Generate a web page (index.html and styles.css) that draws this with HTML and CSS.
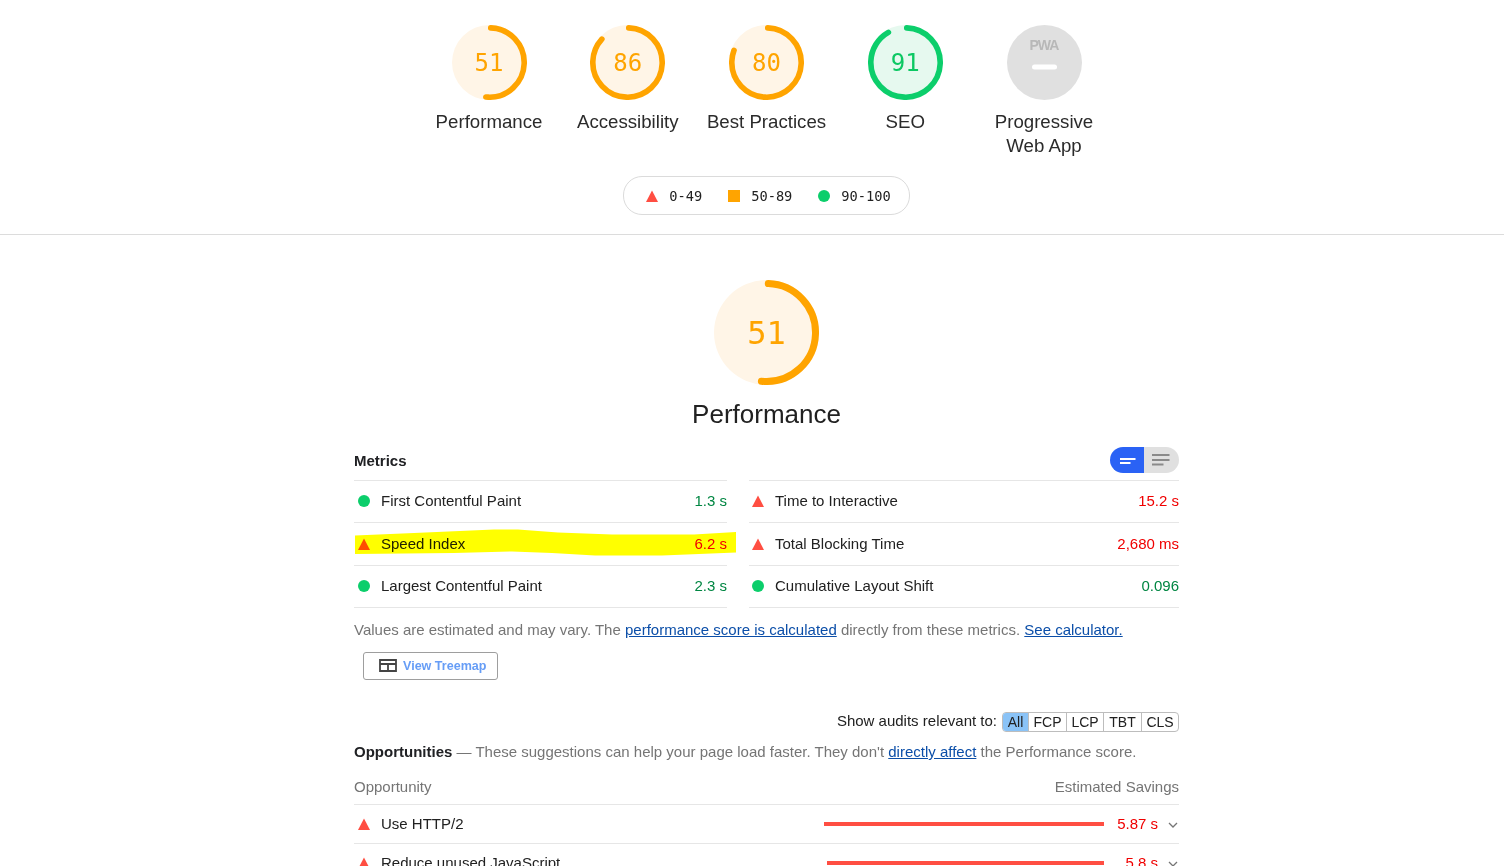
FILE: index.html
```html
<!DOCTYPE html>
<html lang="en">
<head>
<meta charset="utf-8">
<title>Lighthouse Report</title>
<link rel="stylesheet" href="styles.css">
</head>
<body>
<header class="top">
  <div class="wrap">
    <div class="gauges">
      <div class="gauge-item">
        <svg class="gauge" viewBox="0 0 120 120"><circle class="base orange-base" cx="60" cy="60" r="60"/><circle class="arc orange-arc" cx="60" cy="60" r="55.5" stroke-dasharray="178 349"/></svg>
        <div class="num orange-text">51</div>
        <div class="gauge-label">Performance</div>
      </div>
      <div class="gauge-item">
        <svg class="gauge" viewBox="0 0 120 120"><circle class="base orange-base" cx="60" cy="60" r="60"/><circle class="arc orange-arc" cx="60" cy="60" r="55.5" stroke-dasharray="300 349"/></svg>
        <div class="num orange-text">86</div>
        <div class="gauge-label">Accessibility</div>
      </div>
      <div class="gauge-item">
        <svg class="gauge" viewBox="0 0 120 120"><circle class="base orange-base" cx="60" cy="60" r="60"/><circle class="arc orange-arc" cx="60" cy="60" r="55.5" stroke-dasharray="279 349"/></svg>
        <div class="num orange-text">80</div>
        <div class="gauge-label">Best Practices</div>
      </div>
      <div class="gauge-item">
        <svg class="gauge" viewBox="0 0 120 120"><circle class="base green-base" cx="60" cy="60" r="60"/><circle class="arc green-arc" cx="60" cy="60" r="55.5" stroke-dasharray="317.5 349"/></svg>
        <div class="num green-text">91</div>
        <div class="gauge-label">SEO</div>
      </div>
      <div class="gauge-item">
        <svg class="gauge" viewBox="0 0 120 120"><circle class="base grey-base" cx="60" cy="60" r="60"/><rect x="40" y="63" width="40" height="8" rx="4" fill="#fff"/></svg>
        <div class="pwa-logo">PWA</div>
        <div class="gauge-label">Progressive<br>Web App</div>
      </div>
    </div>
    <div class="legend-row">
      <div class="legend">
        <div class="legend-item"><svg class="ico" viewBox="0 0 12 12"><path class="tri" d="M6 0.5 12 12H0z"/></svg><span>0-49</span></div>
        <div class="legend-item"><span class="square"></span><span>50-89</span></div>
        <div class="legend-item"><span class="dot"></span><span>90-100</span></div>
      </div>
    </div>
  </div>
</header>

<main class="wrap main">
  <div class="big-gauge">
    <svg class="gauge-lg" viewBox="0 0 120 120"><circle class="base orange-base" cx="60" cy="60" r="60"/><circle class="arc orange-arc" cx="60" cy="60" r="56" stroke-dasharray="179.5 352"/></svg>
    <div class="num-lg orange-text">51</div>
  </div>
  <h1 class="title">Performance</h1>

  <div class="metrics-head">
    <div class="strong">Metrics</div>
    <div class="toggle">
      <span class="toggle-on"><svg width="16" height="10" viewBox="0 0 16 10"><rect y="3" width="15.5" height="2" fill="#fff"/><rect y="7" width="10.5" height="2" fill="#fff"/></svg></span>
      <span class="toggle-off"><svg width="18" height="14" viewBox="0 0 18 14"><rect y="1" width="17.5" height="2" fill="#8a8a8a"/><rect y="6" width="17.5" height="2" fill="#8a8a8a"/><rect y="10.5" width="11.5" height="2" fill="#8a8a8a"/></svg></span>
    </div>
  </div>

  <div class="metrics">
    <div class="metric"><span class="dot"></span><span class="m-name">First Contentful Paint</span><span class="good">1.3 s</span></div>
    <div class="metric"><svg class="ico" viewBox="0 0 12 12"><path class="tri" d="M6 0.5 12 12H0z"/></svg><span class="m-name">Time to Interactive</span><span class="bad">15.2 s</span></div>
    <div class="metric"><svg class="ico" viewBox="0 0 12 12"><path class="tri" d="M6 0.5 12 12H0z"/></svg><span class="m-name">Speed Index</span><span class="bad">6.2 s</span></div>
    <div class="metric"><svg class="ico" viewBox="0 0 12 12"><path class="tri" d="M6 0.5 12 12H0z"/></svg><span class="m-name">Total Blocking Time</span><span class="bad">2,680 ms</span></div>
    <div class="metric"><span class="dot"></span><span class="m-name">Largest Contentful Paint</span><span class="good">2.3 s</span></div>
    <div class="metric"><span class="dot"></span><span class="m-name">Cumulative Layout Shift</span><span class="good">0.096</span></div>
    <svg class="marker" width="382" height="27" viewBox="0 0 382 27"><path d="M1 6.5 60 4 140 0.5 164 0.5 204 3.5 258 5.5 340 5.5 382 3V23.5L308 26.5 241 26.5 198 24 158 22.5 100 24 1 25z" fill="#ffff00"/></svg>
  </div>

  <p class="note">Values are estimated and may vary. The <a href="#">performance score is calculated</a> directly from these metrics. <a href="#">See calculator.</a></p>

  <div class="treemap-row">
    <a class="treemap" href="#"><svg width="18" height="13" viewBox="0 0 18 13"><path d="M1 1h16v11H1zM1 5h16M9 5v7" fill="none" stroke="#444" stroke-width="1.8"/></svg><span>View Treemap</span></a>
  </div>

  <div class="filter-row">
    <span class="filter-label">Show audits relevant to:</span>
    <div class="chips">
      <span class="chip chip-on">All</span><span class="chip chip-a">FCP</span><span class="chip chip-b">LCP</span><span class="chip chip-a">TBT</span><span class="chip chip-b">CLS</span>
    </div>
  </div>

  <p class="opp-intro"><b class="strong">Opportunities</b> — These suggestions can help your page load faster. They don't <a href="#">directly affect</a> the Performance score.</p>

  <div class="opp-head"><span>Opportunity</span><span>Estimated Savings</span></div>

  <div class="opp-row">
    <svg class="ico" viewBox="0 0 12 12"><path class="tri" d="M6 0.5 12 12H0z"/></svg>
    <span class="m-name">Use HTTP/2</span>
    <span class="bar bar-1"></span>
    <span class="bad saving">5.87 s</span>
    <svg class="chev" width="10" height="6" viewBox="0 0 10 6"><path d="M1 1l4 4 4-4" fill="none" stroke="#757575" stroke-width="1.3"/></svg>
  </div>
  <div class="opp-row">
    <svg class="ico" viewBox="0 0 12 12"><path class="tri" d="M6 0.5 12 12H0z"/></svg>
    <span class="m-name">Reduce unused JavaScript</span>
    <span class="bar bar-2"></span>
    <span class="bad saving">5.8 s</span>
    <svg class="chev" width="10" height="6" viewBox="0 0 10 6"><path d="M1 1l4 4 4-4" fill="none" stroke="#757575" stroke-width="1.3"/></svg>
  </div>
</main>
</body>
</html>
```
FILE: styles.css
```css
html, body {
  margin: 0;
  padding: 0;
  height: 866px;
  overflow: hidden;
  background: #fff;
}
body {
  font-family: "Liberation Sans", Arial, sans-serif;
  font-size: 15px;
  line-height: 20px;
  color: #212121;
}
a { color: #0b4ea8; text-decoration: underline; }
p, h1 { margin: 0; }

.wrap { width: 825px; margin-left: 354px; }

.top {
  border-bottom: 1px solid #dcdcdc;
  padding-top: 25px;
  padding-bottom: 19px;
}
.gauges { display: flex; justify-content: center; }
.gauge-item {
  width: 138.75px;
  position: relative;
  display: flex;
  flex-direction: column;
  align-items: center;
  height: 133px;
}
.gauge { width: 75px; height: 75px; display: block; flex: none; }
.gauge-lg { width: 105px; height: 105px; display: block; }
.orange-base { fill: #fff5e7; }
.green-base { fill: #e6f9ef; }
.grey-base { fill: #e0e0e0; }
.arc {
  fill: none;
  stroke-width: 9;
  stroke-linecap: round;
  transform: rotate(-87.9deg);
  transform-origin: 60px 60px;
}
.big-gauge .arc { stroke-width: 8; }
.orange-arc { stroke: #ffa400; }
.green-arc { stroke: #0cce6b; }
.orange-text { color: #ffa400; }
.green-text { color: #0cc863; }

.num {
  position: absolute;
  top: 0;
  left: 0;
  right: 0;
  height: 75px;
  line-height: 77px;
  text-align: center;
  font-family: "DejaVu Sans Mono", monospace;
  font-size: 24px;
}
.pwa-logo {
  position: absolute;
  top: 12px;
  left: 0;
  right: 0;
  line-height: 17px;
  text-align: center;
  font-size: 14px;
  font-weight: bold;
  letter-spacing: -0.9px;
  color: #b8b8b8;
}
.gauge-label {
  margin-top: 10px;
  font-size: 18.67px;
  line-height: 24px;
  text-align: center;
  color: #2b2b2b;
}

.legend-row { display: flex; justify-content: center; margin-top: 18px; }
.legend {
  display: flex;
  align-items: center;
  gap: 26px;
  height: 39px;
  box-sizing: border-box;
  padding: 0 18px 0 22px;
  border: 1px solid #dbdbdb;
  border-radius: 19px;
  font-family: "DejaVu Sans Mono", monospace;
  font-size: 13.7px;
}
.legend-item { display: flex; align-items: center; gap: 11px; }
.ico { width: 12px; height: 12px; flex: none; display: block; }
.tri { fill: #ff4e42; }
.square { width: 12px; height: 12px; background: #ffa400; flex: none; }
.dot { width: 12px; height: 12px; border-radius: 50%; background: #0cce6b; flex: none; }

.main { padding-top: 45px; }
.big-gauge { position: relative; width: 105px; margin: 0 auto; }
.num-lg {
  position: absolute;
  inset: 0;
  line-height: 107px;
  text-align: center;
  font-family: "DejaVu Sans Mono", monospace;
  font-size: 32px;
}
.title {
  margin-top: 14px;
  font-size: 26px;
  line-height: 30px;
  font-weight: normal;
  text-align: center;
}

.metrics-head {
  margin-top: 18px;
  height: 33px;
  display: flex;
  justify-content: space-between;
  align-items: flex-start;
}
.metrics-head .strong { line-height: 28px; }
.strong { font-weight: bold; color: #202124; }
.toggle { display: flex; height: 26px; border-radius: 13px; overflow: hidden; }
.toggle-on, .toggle-off { display: flex; align-items: center; justify-content: center; }
.toggle-on { width: 34px; background: #2a62f5; padding-left: 2px; box-sizing: border-box; }
.toggle-off { width: 35px; background: #e0e0e0; padding-right: 2px; box-sizing: border-box; }

.metrics {
  position: relative;
  display: grid;
  grid-template-columns: 373px 430px;
  column-gap: 22px;
}
.metric {
  display: flex;
  align-items: center;
  height: 42.33px;
  box-sizing: border-box;
  border-top: 1px solid #e6e6e6;
  padding-left: 4px;
}
.metric:nth-child(even) { padding-left: 3px; }
.metric:nth-child(-n+2) { padding-bottom: 1px; }
.metric:nth-child(5), .metric:nth-child(6) {
  border-bottom: 1px solid #e6e6e6;
  height: 43.33px;
}
.m-name { margin-left: 11px; flex: 1; }
.metric .m-name { color: #212121; }
.good { color: #018642; }
.bad { color: #f00000; }
.marker {
  position: absolute;
  left: 0;
  top: 49px;
  mix-blend-mode: multiply;
}

.note { margin-top: 12px; color: #757575; }
.treemap-row { margin-top: 12px; margin-left: 9px; }
.treemap {
  display: inline-flex;
  align-items: center;
  gap: 6px;
  height: 28px;
  box-sizing: border-box;
  padding: 0 11px 0 15px;
  border: 1px solid #9e9e9e;
  border-radius: 3px;
  font-size: 12.55px;
  font-weight: bold;
  color: #669df6;
  text-decoration: none;
}

.filter-row {
  margin-top: 31px;
  height: 21px;
  display: flex;
  justify-content: flex-end;
  align-items: center;
  gap: 5px;
}
.chips {
  display: flex;
  height: 20px;
  box-sizing: border-box;
  border: 1px solid #bdbdbd;
  border-radius: 4px;
  overflow: hidden;
  margin-top: 2px;
}
.chip {
  line-height: 18px;
  text-align: center;
  font-size: 14px;
  border-left: 1px solid #bdbdbd;
  box-sizing: border-box;
}
.chip-on { width: 25px; background: #8ac3f7; border-left: 0; }
.chip-a { width: 38px; }
.chip-b { width: 37px; }

.opp-intro { margin-top: 10px; color: #757575; }
.opp-head {
  margin-top: 15px;
  padding-bottom: 7px;
  display: flex;
  justify-content: space-between;
  color: #757575;
  border-bottom: 1px solid #e6e6e6;
}
.opp-row {
  display: flex;
  align-items: center;
  height: 39px;
  box-sizing: border-box;
  border-bottom: 1px solid #e6e6e6;
  padding-left: 4px;
}
.bar { height: 4px; background: #ff4e42; flex: none; }
.bar-1 { width: 280px; }
.bar-2 { width: 277px; }
.saving { width: 54px; text-align: right; flex: none; }
.chev { margin-left: 10px; margin-right: 1px; margin-top: 3px; flex: none; }
```
